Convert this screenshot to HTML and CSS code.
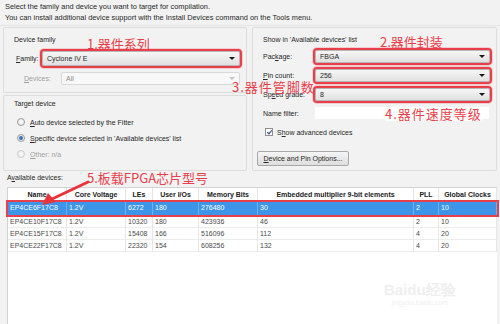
FILE: index.html
```html
<!DOCTYPE html>
<html lang="en">
<head>
    <meta charset="UTF-8">
    <title>Device</title>
    <link rel="stylesheet" href="styles.css">
</head>
<body>
    <div class="dialog">
        <p class="intro">Select the family and device you want to target for compilation.<br>You can install additional device support with the Install Devices command on the Tools menu.</p>

        <div class="groups">
            <div class="col-left">
                <div class="group family">
                    <div class="group-title">Device family</div>
                    <div class="row row-family">
                        <span class="lbl lbl-family"><u>F</u>amily:</span>
                        <div class="combo marked"><span>Cyclone IV E</span><i class="arrow"></i></div>
                    </div>
                    <div class="row row-devices disabled">
                        <span class="lbl lbl-devices"><u>D</u>evices:</span>
                        <div class="combo off"><span>All</span><i class="arrow"></i></div>
                    </div>
                </div>

                <div class="group target">
                    <div class="group-title">Target device</div>
                    <div class="radio-row"><i class="radio"></i><span><u>A</u>uto device selected by the Fitter</span></div>
                    <div class="radio-row"><i class="radio on"></i><span><u>S</u>pecific device selected in 'Available devices' list</span></div>
                    <div class="radio-row disabled"><i class="radio"></i><span><u>O</u>ther: n/a</span></div>
                </div>
            </div>

            <div class="group show">
                <div class="group-title">Show in 'Available devices' list</div>
                <div class="row first">
                    <span class="lbl lbl-right">Pac<u>k</u>age:</span>
                    <div class="combo marked"><span>FBGA</span><i class="arrow"></i></div>
                </div>
                <div class="row">
                    <span class="lbl lbl-right"><u>P</u>in count:</span>
                    <div class="combo marked"><span>256</span><i class="arrow"></i></div>
                </div>
                <div class="row">
                    <span class="lbl lbl-right">Sp<u>e</u>ed grade:</span>
                    <div class="combo marked"><span>8</span><i class="arrow"></i></div>
                </div>
                <div class="row filter">
                    <span class="lbl lbl-right">Name filter:</span>
                    <div class="textbox"></div>
                </div>
                <div class="check-row"><i class="check"></i><span>S<u>h</u>ow advanced devices</span></div>
                <div class="btn"><u>D</u>evice and Pin Options...</div>
            </div>
        </div>

        <div class="avail-label">A<u>v</u>ailable devices:</div>

        <div class="devices">
            <div class="trow thead">
                <span>Name</span><span>Core Voltage</span><span>LEs</span><span>User I/Os</span><span>Memory Bits</span><span>Embedded multiplier 9-bit elements</span><span>PLL</span><span>Global Clocks</span>
            </div>
            <div class="trow selected">
                <span>EP4CE6F17C8</span><span>1.2V</span><span>6272</span><span>180</span><span>276480</span><span>30</span><span>2</span><span>10</span>
            </div>
            <div class="trow">
                <span>EP4CE10F17C8</span><span>1.2V</span><span>10320</span><span>180</span><span>423936</span><span>46</span><span>2</span><span>10</span>
            </div>
            <div class="trow">
                <span>EP4CE15F17C8</span><span>1.2V</span><span>15408</span><span>166</span><span>516096</span><span>112</span><span>4</span><span>20</span>
            </div>
            <div class="trow">
                <span>EP4CE22F17C8</span><span>1.2V</span><span>22320</span><span>154</span><span>608256</span><span>132</span><span>4</span><span>20</span>
            </div>
        </div>

        <!-- red notes drawn over the dialog -->
        <span class="note note-1">1.器件系列</span>
        <span class="note note-2">2.器件封装</span>
        <span class="note note-3">3.器件管脚数</span>
        <span class="note note-4">4.器件速度等级</span>
        <span class="note note-5">5.板载FPGA芯片型号</span>
        <svg class="pointer" width="60" height="30" viewBox="0 0 60 30">
            <line x1="48" y1="2" x2="12" y2="19" stroke="#e8343c" stroke-width="3" stroke-linecap="round"/>
            <polygon points="2,25 8,13 16,22" fill="#e8343c"/>
        </svg>

        <div class="watermark">
            <div class="wm-logo">Bai<span class="paw">du</span>经验</div>
            <div class="wm-url">jingyan.baidu.com</div>
        </div>
    </div>
</body>
</html>
```

FILE: styles.css
```css
:root {
    --face: #f2f2f2;
    --line: #dcdcdc;
    --text: #262626;
    --grey-text: #a0a0a0;
    --red: #e8404a;
    --blue: #3d95ea;
}
body {
    margin: 0;
    background-color: var(--face);
    font-family: 'Liberation Sans', Arial, sans-serif;
    font-size: 7px;
    color: var(--text);
}
u {
    text-decoration: underline;
}
.dialog {
    position: relative;
    width: 500px;
    height: 324px;
    overflow: hidden;
}
.intro {
    margin: 0;
    padding: 1px 5px 0;
    font-size: 7.4px;
    line-height: 11px;
    height: 26px;
    box-sizing: border-box;
    border-bottom: 1px solid #e4e4e4;
}
.groups {
    display: flex;
    gap: 5px;
    padding: 1px 3px 0;
}
.col-left {
    display: flex;
    flex-direction: column;
    gap: 2px;
    width: 244px;
}
.group {
    border: 1px solid var(--line);
    border-radius: 2px;
    box-sizing: border-box;
    padding: 6px 4px 0 10px;
}
.group-title {
    height: 12px;
    line-height: 12px;
}
.family {
    height: 66px;
}
.target {
    height: 76px;
    padding-top: 2px;
}
.show {
    width: 245px;
    height: 144px;
}
.row {
    display: flex;
    align-items: center;
    height: 13px;
    margin-top: 6px;
}
.row.first {
    margin-top: 4px;
}
.row-family {
    height: 15px;
    margin-top: 5px;
    margin-left: 2px;
}
.row-devices {
    margin-top: 6px;
    margin-left: 10px;
}
.lbl-family {
    width: 26px;
}
.lbl-devices {
    width: 37px;
}
.lbl-right {
    width: 52px;
}
.disabled {
    color: var(--grey-text);
}
.combo {
    flex: 1;
    display: flex;
    align-items: center;
    justify-content: space-between;
    align-self: stretch;
    padding: 0 4px;
    margin-right: 2px;
    border: 1px solid #b8b8b8;
    border-radius: 2px;
    background: linear-gradient(#f6f6f6, #e1e1e1);
}
.combo.marked {
    outline: 2px solid var(--red);
    box-shadow: 0 0 0 3px rgba(240, 160, 165, 0.45);
}
.combo.off {
    background: #f8f8f8;
    border-color: #d8d8d8;
    color: #8a8a8a;
}
.arrow {
    width: 0;
    height: 0;
    border-left: 3px solid transparent;
    border-right: 3px solid transparent;
    border-top: 3px solid #1a1a1a;
}
.combo.off .arrow {
    border-top-color: #c4c4c4;
}
.radio-row {
    display: flex;
    align-items: center;
    gap: 5px;
    height: 16px;
    margin-left: 3px;
}
.target .group-title + .radio-row {
    margin-top: 4px;
}
.radio {
    width: 6px;
    height: 6px;
    border: 1px solid #9a9a9a;
    border-radius: 50%;
    background: radial-gradient(#ffffff, #e4e4e4);
    position: relative;
}
.radio.on::after {
    content: "";
    position: absolute;
    left: 1px;
    top: 1px;
    width: 4px;
    height: 4px;
    border-radius: 50%;
    background-color: #3e6fb4;
}
.radio-row.disabled .radio {
    border-color: #cfcfcf;
}
.filter {
    margin-top: 6px;
    height: 12px;
}
.textbox {
    flex: 1;
    align-self: stretch;
    margin-right: 3px;
    background-color: #ffffff;
}
.check-row {
    display: flex;
    align-items: center;
    gap: 4px;
    height: 12px;
    margin-top: 7px;
    margin-left: 2px;
}
.check {
    position: relative;
    width: 6px;
    height: 6px;
    border: 1px solid #8f8f8f;
    background-color: #ffffff;
}
.check::after {
    content: "";
    position: absolute;
    left: 2px;
    top: 0;
    width: 2px;
    height: 4px;
    border-right: 1px solid #243d72;
    border-bottom: 1px solid #243d72;
    transform: rotate(40deg);
}
.btn {
    width: 92px;
    height: 15px;
    line-height: 14px;
    margin-top: 13px;
    margin-left: -6px;
    box-sizing: border-box;
    border: 1px solid #a8a8a8;
    border-radius: 2px;
    background: linear-gradient(#f5f5f5, #dedede);
    text-align: center;
}
.avail-label {
    height: 11px;
    line-height: 11px;
    margin-top: 1px;
    padding-left: 7px;
}
.devices {
    margin: 4px 3px 0 7px;
    height: 140px;
    background-color: #ffffff;
    border: 1px solid #d2d2d2;
    border-right: none;
    border-bottom: none;
}
.trow {
    display: grid;
    grid-template-columns: 59px 59px 27px 46px 59px 156px 25px 1fr;
    height: 12px;
    line-height: 12px;
    color: #4a4a4a;
}
.trow span {
    padding-left: 2px;
    border-right: 1px solid #e6e6e6;
    border-bottom: 1px solid #ececec;
    white-space: nowrap;
    overflow: hidden;
}
.thead {
    height: 13px;
    line-height: 13px;
    font-weight: bold;
    color: #1a1a1a;
}
.thead span {
    padding-left: 0;
    text-align: center;
}
.trow.selected {
    height: 13px;
    margin: 1px 0;
    background-color: var(--blue);
    color: #ffffff;
    outline: 2px solid var(--red);
}
.trow.selected span {
    border-right-color: #6fb0ef;
    border-bottom: none;
}
.note {
    position: absolute;
    font-family: 'Noto Sans CJK SC', sans-serif;
    font-size: 13px;
    line-height: 14px;
    color: var(--red);
    white-space: nowrap;
}
.note-1 { left: 87px; top: 37px; }
.note-2 { left: 380px; top: 35px; }
.note-3 { left: 232px; top: 80px; letter-spacing: 1px; }
.note-4 { left: 385px; top: 107px; letter-spacing: 1px; background-color: #ffffff; }
.note-5 { left: 87px; top: 171px; }
.pointer {
    position: absolute;
    left: 40px;
    top: 180px;
}
.watermark {
    position: absolute;
    left: 384px;
    top: 282px;
    color: #efefef;
    text-align: center;
}
.wm-logo {
    font-size: 15px;
    line-height: 16px;
    font-weight: bold;
}
.wm-url {
    font-size: 7px;
    line-height: 9px;
}
```
